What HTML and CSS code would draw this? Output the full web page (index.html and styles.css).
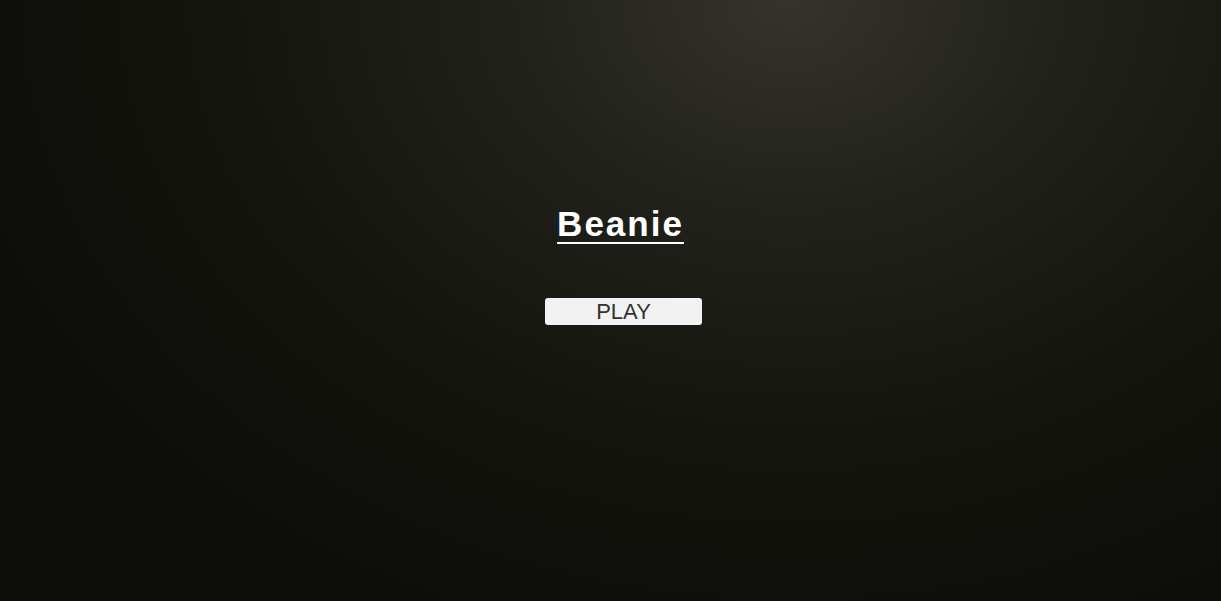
FILE: index.html
```html
<!DOCTYPE html>
<html lang="en">

<head>
    <meta charset="UTF-8">
    <meta name="viewport" content="width=device-width, initial-scale=1.0">
    <title>Beanie</title>
    <link rel="stylesheet" href="styles.css">
</head>

<body>
    <div class="menu">
        <h1 class="title">Beanie</h1>
        <button class="play">PLAY</button>
    </div>
</body>

</html>
```

FILE: styles.css
```css
html,
body {
    height: 100%;
}

body {
    margin: 0;
    font-family: 'Liberation Sans', Arial, sans-serif;
    background-color: #0c0c09;
    background-image: radial-gradient(ellipse 900px 700px at 790px 0, #34342c 0, #22221c 30%, #15150f 62%, #0c0c09 100%);
}

.menu {
    display: flex;
    flex-direction: column;
    align-items: center;
    padding-top: 204px;
    padding-left: 20px;
}

.title {
    margin: 0;
    font-size: 35px;
    font-weight: bold;
    letter-spacing: 2px;
    color: #fff;
    text-decoration: underline;
    text-decoration-thickness: 2px;
    text-underline-offset: 6px;
}

.play {
    margin-top: 54px;
    margin-left: 6px;
    width: 157px;
    height: 27px;
    padding: 0;
    border: none;
    border-radius: 3px;
    background-color: #f2f2f2;
    color: #333;
    font-family: 'Liberation Sans', Arial, sans-serif;
    font-size: 22px;
    line-height: 27px;
    cursor: pointer;
}
```
